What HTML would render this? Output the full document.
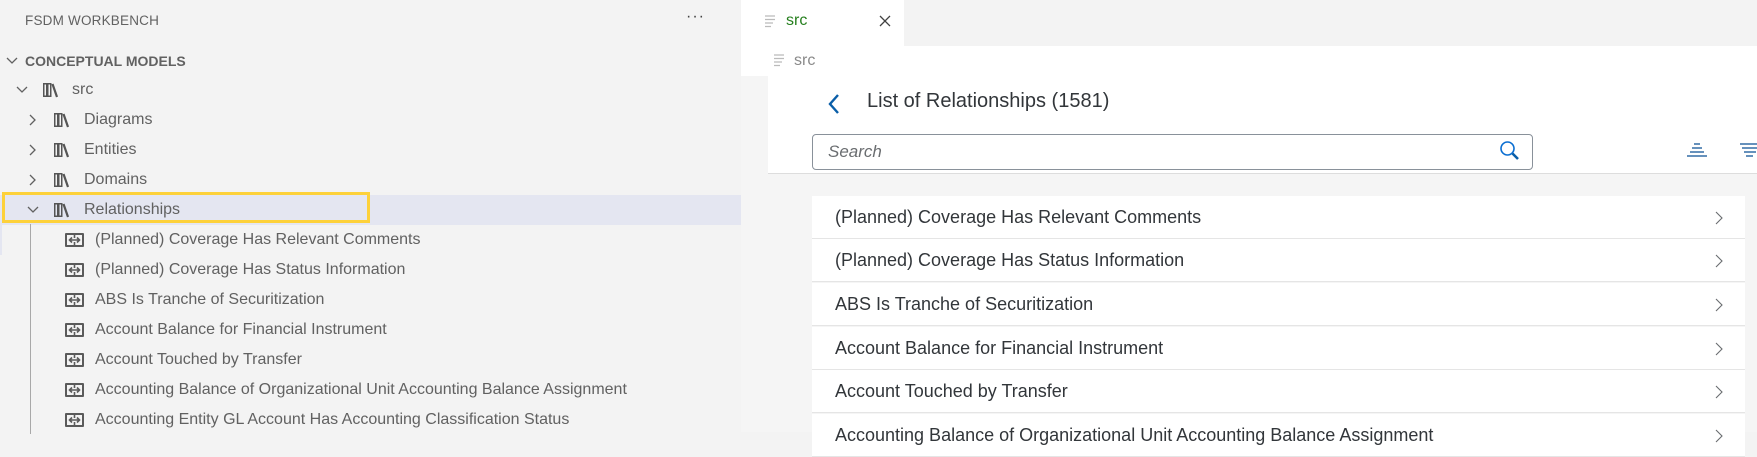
<!DOCTYPE html>
<html><head><meta charset="utf-8"><style>
*{margin:0;padding:0;box-sizing:border-box}
body{width:1757px;height:432px;overflow:hidden;background:#f3f3f3;font-family:"Liberation Sans",sans-serif;position:relative}
.a{position:absolute;white-space:nowrap}
.t{color:#616161;font-size:16px;line-height:30px}
.row{position:absolute;left:812px;width:933px;height:43px;background:#fff;border-bottom:1px solid #e5e5e5;font-size:18px;color:#32363a;line-height:42px;padding-left:23px}
.row svg{position:absolute;right:22px;top:15px}
</style></head><body>
<div class="a" style="left:25px;top:13px;font-size:13.5px;color:#616161;letter-spacing:0.2px">FSDM WORKBENCH</div>
<div class="a" style="left:686px;top:8px;font-size:16px;color:#424242;letter-spacing:1px">···</div>
<svg class="a" style="left:5px;top:56px" width="14" height="10"><path d="M2 2l5 5 5-5" fill="none" stroke="#616161" stroke-width="1.3"/></svg>
<div class="a" style="left:25px;top:53px;font-size:14px;font-weight:bold;color:#616161">CONCEPTUAL MODELS</div>
<svg width="0" height="0" style="position:absolute"><defs>
<g id="bk"><rect x="0.75" y="0.75" width="3" height="12.5" fill="none" stroke="#555" stroke-width="1.5"/><rect x="4.75" y="0.75" width="3" height="12.5" fill="none" stroke="#555" stroke-width="1.5"/><path d="M9.5 1l4.5 13" stroke="#555" stroke-width="2.2"/></g>
<g id="rl"><rect x="0" y="0" width="19" height="14" rx="1" fill="#5a5a5a"/><rect x="2" y="2" width="15" height="10" fill="#f3f3f3"/><path d="M4 7h11M7 4.5L4.5 7 7 9.5M12 4.5L14.5 7 12 9.5M9.5 2v3M9.5 9v3" stroke="#5a5a5a" stroke-width="1.6" fill="none"/></g>
</defs></svg>
<svg class="a" style="left:15px;top:85px" width="14" height="10"><path d="M2 2l5 5 5-5" fill="none" stroke="#616161" stroke-width="1.3"/></svg>
<svg class="a" style="left:43px;top:83px" width="16" height="15"><use href="#bk"/></svg>
<div class="a t" style="left:72px;top:75px">src</div>
<svg class="a" style="left:28px;top:113px" width="10" height="14"><path d="M2 2l5 5-5 5" fill="none" stroke="#616161" stroke-width="1.3"/></svg>
<svg class="a" style="left:54px;top:113px" width="16" height="15"><use href="#bk"/></svg>
<div class="a t" style="left:84px;top:105px">Diagrams</div>
<svg class="a" style="left:28px;top:143px" width="10" height="14"><path d="M2 2l5 5-5 5" fill="none" stroke="#616161" stroke-width="1.3"/></svg>
<svg class="a" style="left:54px;top:143px" width="16" height="15"><use href="#bk"/></svg>
<div class="a t" style="left:84px;top:135px">Entities</div>
<svg class="a" style="left:28px;top:173px" width="10" height="14"><path d="M2 2l5 5-5 5" fill="none" stroke="#616161" stroke-width="1.3"/></svg>
<svg class="a" style="left:54px;top:173px" width="16" height="15"><use href="#bk"/></svg>
<div class="a t" style="left:84px;top:165px">Domains</div>
<div class="a" style="left:0;top:195px;width:741px;height:30px;background:#e4e6f1"></div>
<div class="a" style="left:2px;top:192px;width:368px;height:31px;border:3px solid #fdd13a"></div>
<svg class="a" style="left:26px;top:205px" width="14" height="10"><path d="M2 2l5 5 5-5" fill="none" stroke="#616161" stroke-width="1.3"/></svg>
<svg class="a" style="left:54px;top:203px" width="16" height="15"><use href="#bk"/></svg>
<div class="a t" style="left:84px;top:195px">Relationships</div>
<div class="a" style="left:0;top:225px;width:2px;height:30px;background:#e4e6f1"></div>
<div class="a" style="left:30px;top:224px;width:1px;height:210px;background:#a8a8a8"></div>
<svg class="a" style="left:65px;top:233px" width="20" height="15"><use href="#rl"/></svg>
<div class="a t" style="left:95px;top:225px">(Planned) Coverage Has Relevant Comments</div>
<svg class="a" style="left:65px;top:263px" width="20" height="15"><use href="#rl"/></svg>
<div class="a t" style="left:95px;top:255px">(Planned) Coverage Has Status Information</div>
<svg class="a" style="left:65px;top:293px" width="20" height="15"><use href="#rl"/></svg>
<div class="a t" style="left:95px;top:285px">ABS Is Tranche of Securitization</div>
<svg class="a" style="left:65px;top:323px" width="20" height="15"><use href="#rl"/></svg>
<div class="a t" style="left:95px;top:315px">Account Balance for Financial Instrument</div>
<svg class="a" style="left:65px;top:353px" width="20" height="15"><use href="#rl"/></svg>
<div class="a t" style="left:95px;top:345px">Account Touched by Transfer</div>
<svg class="a" style="left:65px;top:383px" width="20" height="15"><use href="#rl"/></svg>
<div class="a t" style="left:95px;top:375px">Accounting Balance of Organizational Unit Accounting Balance Assignment</div>
<svg class="a" style="left:65px;top:413px" width="20" height="15"><use href="#rl"/></svg>
<div class="a t" style="left:95px;top:405px">Accounting Entity GL Account Has Accounting Classification Status</div>
<div class="a" style="left:741px;top:0;width:163px;height:46px;background:#fff"></div>
<svg class="a" style="left:765px;top:15px" width="12" height="14"><path d="M0 1h10M0 4.5h10M0 8h8M0 11.5h6" stroke="#bbb" stroke-width="1.3"/></svg>
<div class="a" style="left:786px;top:12px;font-size:16px;color:#267f1e">src</div>
<svg class="a" style="left:879px;top:15px" width="12" height="12"><path d="M1 1l10 10M11 1L1 11" stroke="#424242" stroke-width="1.3"/></svg>
<div class="a" style="left:741px;top:46px;width:1016px;height:30px;background:#fff"></div>
<svg class="a" style="left:774px;top:54px" width="12" height="14"><path d="M0 1h10M0 4.5h10M0 8h8M0 11.5h6" stroke="#bbb" stroke-width="1.3"/></svg>
<div class="a" style="left:794px;top:52px;font-size:16px;color:#8a8a8a">src</div>
<div class="a" style="left:741px;top:76px;width:1016px;height:356px;background:#f5f5f5"></div>
<div class="a" style="left:768px;top:76px;width:989px;height:98px;background:#fff;border-bottom:1px solid #ddd"></div>
<svg class="a" style="left:827px;top:93px" width="14" height="22"><path d="M11 2L3 11l8 9" fill="none" stroke="#0a5ea8" stroke-width="2.4"/></svg>
<div class="a" style="left:867px;top:90px;font-size:20px;color:#32363a">List of Relationships (1581)</div>
<div class="a" style="left:812px;top:134px;width:721px;height:36px;border:1px solid #89919a;border-radius:4px;background:#fff"></div>
<div class="a" style="left:828px;top:142px;font-size:17px;font-style:italic;color:#6a6d70">Search</div>
<svg class="a" style="left:1499px;top:140px" width="22" height="22"><circle cx="8.5" cy="8.5" r="6.5" fill="none" stroke="#0a6ed1" stroke-width="1.6"/><path d="M13.5 13.5L19 19" stroke="#0a5ea8" stroke-width="2.6"/></svg>
<svg class="a" style="left:1685px;top:143px" width="24" height="16"><path d="M9 1h6M7 5h10M5 9h14M2 13h20" stroke="#0a4f94" stroke-width="1.3"/></svg>
<svg class="a" style="left:1739px;top:143px" width="18" height="16"><path d="M1 1h17M3 5h15M5 9h12M7 13h7" stroke="#0a4f94" stroke-width="1.3"/></svg>
<div class="row" style="top:196px">(Planned) Coverage Has Relevant Comments<svg width="8" height="14"><path d="M1 1l6 6-6 6" fill="none" stroke="#6a6d70" stroke-width="1.1"/></svg></div>
<div class="row" style="top:239px">(Planned) Coverage Has Status Information<svg width="8" height="14"><path d="M1 1l6 6-6 6" fill="none" stroke="#6a6d70" stroke-width="1.1"/></svg></div>
<div class="row" style="top:283px">ABS Is Tranche of Securitization<svg width="8" height="14"><path d="M1 1l6 6-6 6" fill="none" stroke="#6a6d70" stroke-width="1.1"/></svg></div>
<div class="row" style="top:327px">Account Balance for Financial Instrument<svg width="8" height="14"><path d="M1 1l6 6-6 6" fill="none" stroke="#6a6d70" stroke-width="1.1"/></svg></div>
<div class="row" style="top:370px">Account Touched by Transfer<svg width="8" height="14"><path d="M1 1l6 6-6 6" fill="none" stroke="#6a6d70" stroke-width="1.1"/></svg></div>
<div class="row" style="top:414px">Accounting Balance of Organizational Unit Accounting Balance Assignment<svg width="8" height="14"><path d="M1 1l6 6-6 6" fill="none" stroke="#6a6d70" stroke-width="1.1"/></svg></div>
</body></html>
